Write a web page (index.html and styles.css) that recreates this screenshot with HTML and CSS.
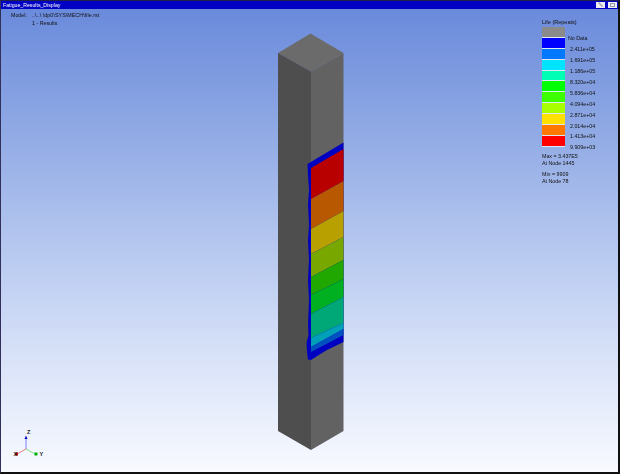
FILE: index.html
```html
<!DOCTYPE html>
<html lang="en">
<head>
<meta charset="utf-8">
<title>Fatigue_Results_Display</title>
<link rel="stylesheet" href="styles.css">
</head>
<body>
<div class="window">
  <header class="titlebar">
    <span class="title">Fatigue_Results_Display</span>
    <div class="buttons">
      <span class="btn"><svg viewBox="0 0 9 6" width="9" height="6" aria-hidden="true"><path class="glyph" d="M2 1h2v2h2v2"/></svg></span>
      <span class="btn"><svg viewBox="0 0 9 6" width="9" height="6" aria-hidden="true"><rect class="glyph" x="2.500" y="1.500" width="4" height="3"/></svg></span>
    </div>
  </header>
  <main class="viewport">
    <div class="model-info">
      <span>Model:</span><span class="path">..\..\ \dp0\SYS\MECH\file.rst</span>
      <span></span><span>1 - Results</span>
    </div>
    <svg class="scene" viewBox="0 0 620 474" width="620" height="474" aria-hidden="true">
      <polygon class="top" points="310.5,33.5 343.5,53 311,71.5 278,53"/>
      <polygon class="left" points="278,53 311,71.5 311,450 278,431"/>
      <polygon class="right" points="311,71.5 343.5,53 343.5,431 311,450"/>
      <polygon fill="#0000c0" points="343.5,142.500 343.5,342 327,350 322,353 311,360 308,359.500 307,352 306.500,343 308.500,335 308,325 309,300 308,280 309,260 308,240 309,225 308,205 309,190 308,175 307.500,164"/>
      <polygon fill="#b80000" points="343.5,149 343.5,181 311,199 311,168"/>
      <polygon fill="#b85800" points="343.5,181 343.5,211 311,229 311,199"/>
      <polygon fill="#b8a000" points="343.5,211 343.5,237 311,254 311,229"/>
      <polygon fill="#78a800" points="343.5,237 343.5,260 311,277 311,254"/>
      <polygon fill="#20a800" points="343.5,260 343.5,279 311,295 311,277"/>
      <polygon fill="#00b020" points="343.5,279 343.5,297 311,314 311,295"/>
      <polygon fill="#00a878" points="343.5,297 343.5,323 311,338 311,314"/>
      <polygon fill="#00a0b8" points="343.5,323 343.5,329 311,347 311,338"/>
      <polygon fill="#0050c0" points="343.5,329 343.5,335 311,352 311,347"/>
      <g class="triad">
        <line class="axis-z" x1="26" y1="449" x2="26" y2="438"/>
        <line class="axis-x" x1="26" y1="449" x2="17" y2="454"/>
        <line class="axis-y" x1="26" y1="449" x2="35" y2="454"/>
        <polygon fill="#0000c8" points="26,435.5 24.5,439 27.500,439"/>
        <rect fill="#c00000" x="15" y="452.500" width="3" height="3"/>
        <rect fill="#00b000" x="34.500" y="452.500" width="3" height="3"/>
        <text x="27" y="433.500">Z</text>
        <text x="13.500" y="456">X</text>
        <text x="39.500" y="456">Y</text>
      </g>
    </svg>
    <aside class="legend">
      <div class="legend-title">Life (Repeats)</div>
      <div class="scale">
        <div class="row"><i class="swatch c0"></i><span class="nodata">No Data</span></div>
        <div class="row"><i class="swatch c1"></i><span>2.411e+05</span></div>
        <div class="row"><i class="swatch c2"></i><span>1.691e+05</span></div>
        <div class="row"><i class="swatch c3"></i><span>1.186e+05</span></div>
        <div class="row"><i class="swatch c4"></i><span>8.320e+04</span></div>
        <div class="row"><i class="swatch c5"></i><span>5.836e+04</span></div>
        <div class="row"><i class="swatch c6"></i><span>4.094e+04</span></div>
        <div class="row"><i class="swatch c7"></i><span>2.871e+04</span></div>
        <div class="row"><i class="swatch c8"></i><span>2.014e+04</span></div>
        <div class="row"><i class="swatch c9"></i><span>1.413e+04</span></div>
        <div class="row"><i class="swatch c10"></i><span>9.909e+03</span></div>
      </div>
      <div class="stat">Max = 3.437E5<br>At Node 1445</div>
      <div class="stat">Min = 9909<br>At Node 78</div>
    </aside>
  </main>
</div>
</body>
</html>
```

FILE: styles.css
```css
html, body {
  margin: 0;
  padding: 0;
  width: 620px;
  height: 474px;
  overflow: hidden;
  background: #fff;
}
.window {
  box-sizing: border-box;
  width: 620px;
  height: 474px;
  display: flex;
  flex-direction: column;
  border-top: 1px solid #20204a;
  border-left: 1px solid #30305a;
  border-right: 2px solid #101010;
  border-bottom: 2px solid #101010;
  font-family: "Liberation Sans", Arial, sans-serif;
  color: #111;
}
.titlebar {
  flex: 0 0 8px;
  display: flex;
  align-items: center;
  justify-content: space-between;
  background: #0000c4;
  color: #fff;
  font-size: 5.200px;
  padding: 0 1px 0 2px;
}
.title { filter: blur(0.3px); }
.buttons { display: flex; gap: 3px; }
.btn { display: block; width: 9px; height: 6px; background: #eceef4; }
.btn svg { display: block; }
.glyph { fill: none; stroke: #9a9aa4; stroke-width: 1; }
.viewport {
  position: relative;
  flex: 1;
  overflow: hidden;
  background: linear-gradient(#6a8adb 0%, #8ea8e4 25%, #b4c6ef 50%, #d8e2f8 75%, #f8faff 100%);
}
.model-info {
  position: absolute;
  left: 10px;
  top: 3px;
  display: grid;
  grid-template-columns: 21px auto;
  row-gap: 1.500px;
  font-size: 5.300px;
  line-height: 6px;
  filter: blur(0.3px);
}
.path { letter-spacing: 0.07px; }
.scene {
  position: absolute;
  left: -1px;
  top: -9px;
}
.top { fill: #6b6b6b; }
.left { fill: #4e4e4e; }
.right { fill: #626262; }
.triad line { stroke-width: 1; }
.axis-z { stroke: #8080f0; }
.axis-x { stroke: #f08080; }
.axis-y { stroke: #80e080; }
.triad text {
  font-family: "Liberation Sans", Arial, sans-serif;
  font-size: 5.500px;
  font-weight: bold;
  fill: #222;
}
.legend {
  position: absolute;
  left: 541px;
  top: 10px;
  width: 70px;
  font-size: 5.300px;
  line-height: 6px;
  filter: blur(0.3px);
}
.legend-title { height: 8px; font-size: 5.500px; }
.row {
  display: flex;
  height: 10.900px;
}
.swatch {
  display: block;
  box-sizing: border-box;
  flex: 0 0 23px;
  height: 100%;
  border-bottom: 1.200px solid #dfe6f6;
}
.row span {
  margin-left: 5px;
  align-self: flex-end;
  position: relative;
  top: 3.500px;
}
.row .nodata { margin-left: 3px; }
.c0 { background: #8a8a8a; }
.c1 { background: #0000ff; }
.c2 { background: #0078ff; }
.c3 { background: #00e4ff; }
.c4 { background: #00ffb4; }
.c5 { background: #00ff00; }
.c6 { background: #3cff00; }
.c7 { background: #a8ff00; }
.c8 { background: #ffe000; }
.c9 { background: #ff7800; }
.c10 { background: #ff0000; }
.scale { margin-bottom: 6.500px; }
.stat { margin-bottom: 3.500px; line-height: 7px; }
```
